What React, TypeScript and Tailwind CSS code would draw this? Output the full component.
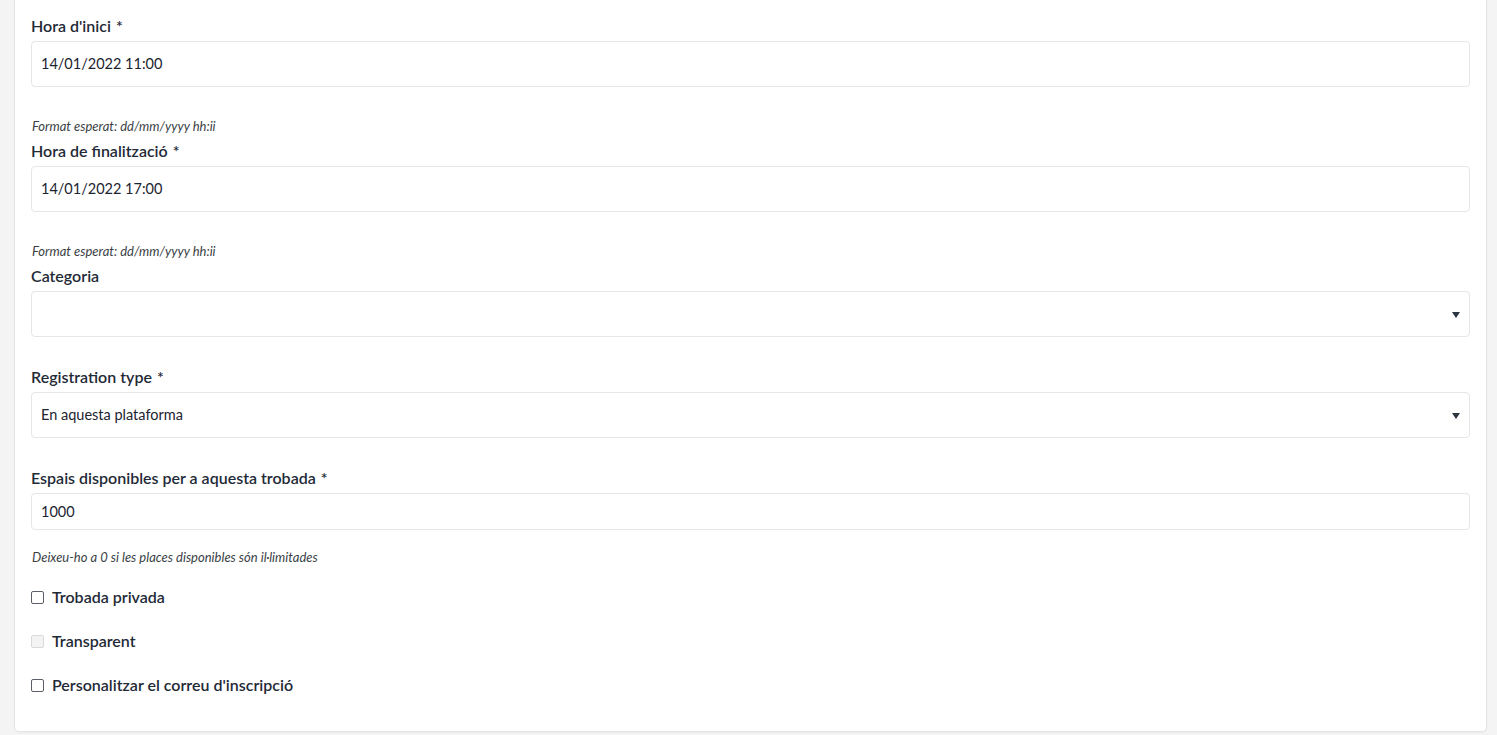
import React from 'react';

const FONT = "font-['Source_Sans_Pro','Lato','Liberation_Sans',sans-serif]";

type FieldProps = {
    label: string;
    required?: boolean;
    children: React.ReactNode;
};

const Field: React.FC<FieldProps> = ({ label, required, children }) => (
    <div className="flex flex-col">
        <label className="mb-[3px] text-[16px] leading-6 font-semibold text-[#1f2a37]">
            {label}
            {required && <span className="ml-[5px]">*</span>}
        </label>
        {children}
    </div>
);

const Help: React.FC<{ text: string }> = ({ text }) => (
    <p className="pl-px text-[13px] leading-[18px] italic text-[#3a3f46]">{text}</p>
);

const TextBox: React.FC<{ value: string; tall?: boolean }> = ({ value, tall }) => (
    <div
        className={`flex items-center rounded-[4px] border border-[#e6e6e6] bg-white px-[9px] text-[14.5px] text-[#1c2430] ${tall ? 'h-[46px]' : 'h-[37px]'}`}
    >
        {value}
    </div>
);

const SelectBox: React.FC<{ value?: string }> = ({ value }) => (
    <div className="flex h-[46px] items-center justify-between rounded-[4px] border border-[#e6e6e6] bg-white pl-[9px] pr-[9px] text-[14.5px] text-[#1c2430]">
        <span>{value ?? ''}</span>
        <svg width="8" height="6" viewBox="0 0 8 6" className="mt-[1px]">
            <path d="M0 0 H8 L4 6 Z" fill="#2b3443" />
        </svg>
    </div>
);

const Check: React.FC<{ label: string; disabled?: boolean }> = ({ label, disabled }) => (
    <label className="flex h-6 items-center gap-[8px] text-[16px] font-semibold text-[#1f2a37]">
        <span
            className={`block h-[13px] w-[13px] rounded-[2px] border ${disabled ? 'border-[#d9d9d9] bg-[#f3f3f3]' : 'border-[#5a5f66] bg-white'}`}
        />
        {label}
    </label>
);

export default function App() {
    return (
        <div className={`${FONT} h-[735px] overflow-hidden bg-[#f4f4f4] pr-[10px] pl-[14px]`}>
            <div className="rounded-b-[5px] border border-t-0 border-[#e4e4e4] bg-white pt-[14px] pr-[16px] pb-[34px] pl-[16px] shadow-[0_1px_2px_rgba(0,0,0,0.04)]">
                <Field label="Hora d'inici" required>
                    <TextBox value="14/01/2022 11:00" tall />
                </Field>
                <div className="mt-[30px] mb-[4px]">
                    <Help text="Format esperat: dd/mm/yyyy hh:ii" />
                </div>

                <Field label="Hora de finalització" required>
                    <TextBox value="14/01/2022 17:00" tall />
                </Field>
                <div className="mt-[30px] mb-[4px]">
                    <Help text="Format esperat: dd/mm/yyyy hh:ii" />
                </div>

                <Field label="Categoria">
                    <SelectBox />
                </Field>

                <div className="mt-[28px]">
                    <Field label="Registration type" required>
                        <SelectBox value="En aquesta plataforma" />
                    </Field>
                </div>

                <div className="mt-[28px]">
                    <Field label="Espais disponibles per a aquesta trobada" required>
                        <TextBox value="1000" />
                    </Field>
                </div>
                <div className="mt-[18px]">
                    <Help text="Deixeu-ho a 0 si les places disponibles són il·limitades" />
                </div>

                <div className="mt-[19px] flex flex-col gap-5">
                    <Check label="Trobada privada" />
                    <Check label="Transparent" disabled />
                    <Check label="Personalitzar el correu d'inscripció" />
                </div>
            </div>
        </div>
    );
}
